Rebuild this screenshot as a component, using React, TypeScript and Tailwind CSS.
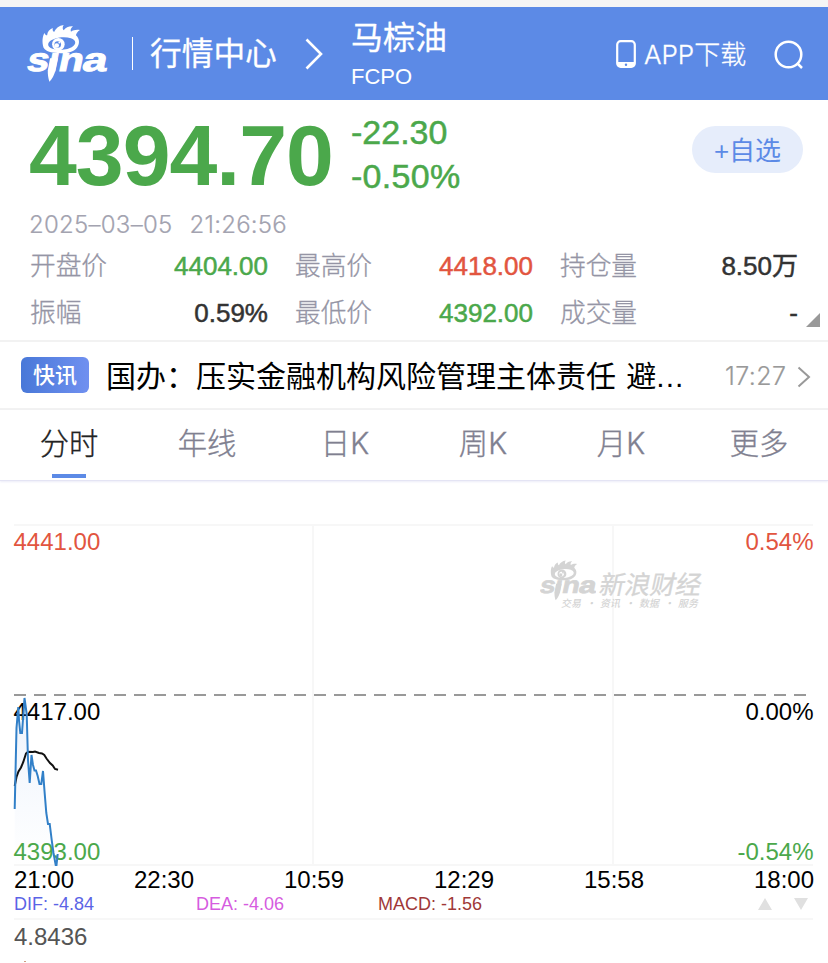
import { memo } from "react";
import clsx from "clsx";

interface Quote {
  label: string;
  value: string;
  tone: "up" | "down" | "flat";
}

const toneMap: Record<Quote["tone"], string> = {
  up: "text-[#e2553f]",
  down: "text-[#4ba84b]",
  flat: "text-[#333333]",
};

const quotes: Quote[] = [
  { label: "开盘价", value: "4404.00", tone: "down" },
  { label: "最高价", value: "4418.00", tone: "up" },
  { label: "持仓量", value: "8.50万", tone: "flat" },
  { label: "振幅", value: "0.59%", tone: "flat" },
  { label: "最低价", value: "4392.00", tone: "down" },
  { label: "成交量", value: "-", tone: "flat" },
];

const tabs = ["分时", "年线", "日K", "周K", "月K", "更多"];

// coordinates inside the chart svg (its top is the bottom of the tab bar)
const pricePoints: [number, number][] = [
  [14.7, 328], [15.3, 301], [16.5, 247], [18.3, 226], [19, 239], [20.3, 252], [22, 252],
  [24.5, 217], [26.7, 233], [28, 279], [29.7, 302], [31.5, 274], [33, 284], [34.5, 289.5],
  [36, 289.5], [37.7, 295], [39.5, 303], [41.3, 303], [43, 290], [44.5, 310], [46.3, 332],
  [48, 343], [49.7, 343], [51.7, 359], [53.5, 372], [55.7, 384], [56.5, 384], [57.7, 373],
];

const averagePoints: [number, number][] = [
  [14.7, 305], [16.5, 296], [18.5, 290.5], [21, 286.5], [23.3, 281], [26, 272.5], [28, 270.7],
  [33, 271], [35, 270.5], [39, 272], [42, 272.5], [44.3, 274], [46.5, 277.5], [50, 282],
  [52.7, 284.5], [55, 288], [58, 288.8],
];

const toPoints = (list: [number, number][]) => list.map((p) => p.join(",")).join(" ");

const SinaLogo = memo(function SinaLogo({ className, hole }: { className?: string; hole: string }) {
  return (
    <svg viewBox="0 0 240 172" className={className} fill="currentColor" overflow="visible">
      <path d="M49 68C44 50 46 34 52 24C54 29 56 31 60 31C61 20 67 13 77 9C76 15 77 19 81 21C86 10 96 2 110 0C106 7 106 12 110 16C116 8 126 3 138 4C131 10 130 15 132 20C139 15 149 13 159 15C151 20 148 26 147 31C158 41 159 56 151 67C142 80 122 86 101 85C77 85 56 81 49 68Z" />
      <ellipse cx="104" cy="56" rx="41" ry="19" transform="rotate(-5 104 56)" fill={hole} />
      <circle cx="94" cy="58" r="19" />
      <circle cx="92" cy="59" r="10" fill={hole} />
      <circle cx="89" cy="62" r="7" />
      <circle cx="97" cy="53" r="3" />
      <g
        transform="translate(0 139) skewX(-12)"
        fontSize="100"
        fontWeight="700"
        fontFamily="'Liberation Sans', sans-serif"
        stroke="currentColor"
        strokeWidth="3"
      >
        <text x="-5" textLength="66" lengthAdjust="spacingAndGlyphs">s</text>
        <text x="58" textLength="32" lengthAdjust="spacingAndGlyphs">ı</text>
        <text x="90" textLength="75" lengthAdjust="spacingAndGlyphs">n</text>
        <text x="162" textLength="74" lengthAdjust="spacingAndGlyphs">a</text>
      </g>
      <path d="M69 100L93 100L85 139C81 152 75 163 67 171C63 160 62 149 62 137Z" />
    </svg>
  );
});

const Header = memo(function Header() {
  return (
    <header className="flex h-[100px] items-center border-t-[7px] border-[#f5f5f5] bg-[#5c8ae6] pl-[27px] text-white">
      <SinaLogo className="-mt-px h-[57px] w-[80px]" hole="#5c8ae6" />
      <div className="ml-[25px] h-[33px] w-px bg-white" />
      <span className="mt-[2px] ml-[17px] w-[128px] text-[31.7px] leading-none [-webkit-text-stroke:0.3px]">行情中心</span>
      <svg viewBox="0 0 18 32" className="ml-[27px] h-8 w-[18px]" fill="none" stroke="currentColor" strokeWidth="2.6">
        <path d="M1.5 1.5L16 16L1.5 30.5" />
      </svg>
      <div className="ml-[28px] flex w-[265px] flex-col pt-[2px]">
        <span className="text-[32px] leading-[38px] [-webkit-text-stroke:0.3px]">马棕油</span>
        <span className="mt-[7px] text-[22px] leading-[26px]">FCPO</span>
      </div>
      <svg viewBox="0 0 20 28" className="h-7 w-5">
        <rect x="1.2" y="1.2" width="17.6" height="25.6" rx="3.5" fill="none" stroke="currentColor" strokeWidth="2.2" />
        <path d="M1 22H19V24Q19 27 16 27H4Q1 27 1 24Z" fill="currentColor" />
        <circle cx="10" cy="24.8" r="1.2" fill="#5c8ae6" />
      </svg>
      <span className="mt-[2px] ml-2 font-['Inter','Noto_Sans_CJK_SC',sans-serif] text-[26px] leading-none font-light [-webkit-text-stroke:0.3px]">
        APP下载
      </span>
      <svg viewBox="0 0 30 30" className="mt-[2px] ml-[28px] h-[30px] w-[30px]" fill="none" stroke="currentColor" strokeWidth="2.5">
        <circle cx="14.5" cy="14.5" r="12.8" />
        <path d="M23 23L28 28" />
      </svg>
    </header>
  );
});

const PricePanel = memo(function PricePanel() {
  return (
    <section className="relative h-[242px] border-b-2 border-[#f2f2f2] pl-[29px]">
      <div className="flex h-[106px] pt-[10px]">
        <span className="-mt-px w-[322px] text-[86px] leading-[92px] font-bold tracking-[-1px] text-[#4ba84b]">
          4394.70
        </span>
        <div className="w-[341px] text-[34px] leading-[44px] text-[#4ba84b] [-webkit-text-stroke:0.5px]">
          <div>-22.30</div>
          <div className="tracking-[0.3px]">-0.50%</div>
        </div>
        <button className="mt-4 h-[47px] w-[111px] rounded-full bg-[#e6edfb] pt-[3px] text-[26px] leading-[44px] text-[#5c8ae6]">
          +自选
        </button>
      </div>
      <div className="flex h-[37px] items-center gap-[17px] font-['Inter',sans-serif] text-[24px] font-light tracking-[0.25px] text-[#a3a3b0] [-webkit-text-stroke:0.2px]">
        <span>2025–03–05</span>
        <span>21:26:56</span>
      </div>
      <div className="grid w-[769px] grid-cols-3 gap-x-[27px] pl-px">
        {quotes.map((q) => (
          <div key={q.label} className="flex h-[47px] items-center justify-between text-[26px] leading-none">
            <span className="mt-px text-[25.7px] font-light text-[#9595a5] [-webkit-text-stroke:0.3px]">{q.label}</span>
            <span className={clsx("-mt-px [-webkit-text-stroke:0.5px]", toneMap[q.tone])}>{q.value}</span>
          </div>
        ))}
      </div>
      <svg viewBox="0 0 14 14" className="absolute top-[213px] left-[806px] h-[14px] w-[14px]">
        <path d="M14 0V14H0Z" fill="#999999" />
      </svg>
    </section>
  );
});

const NewsBar = memo(function NewsBar() {
  return (
    <section className="flex h-[68px] items-center border-b-2 border-[#f2f2f2] pl-[21px]">
      <span className="h-9 w-[68px] rounded-md bg-linear-to-r from-[#4878d8] to-[#7090f0] pt-px text-center text-[22px] leading-[35px] font-medium text-white">
        快讯
      </span>
      <span className="mt-[3px] ml-[17px] w-[619px] text-[30px] leading-none whitespace-nowrap text-black [word-spacing:2px]">
        国办：压实金融机构风险管理主体责任 避<span className="tracking-[1px]">...</span>
      </span>
      <span className="mt-[2px] font-['Inter',sans-serif] text-[25px] leading-none font-light tracking-[0.4px] text-[#999999] [-webkit-text-stroke:0.2px]">
        17:27
      </span>
      <svg viewBox="0 0 14 22" className="mt-[3px] ml-[11px] h-[22px] w-[14px]" fill="none" stroke="#999999" strokeWidth="2">
        <path d="M1.5 1.5L12 11L1.5 20.5" />
      </svg>
    </section>
  );
});

const TabBar = memo(function TabBar() {
  return (
    <nav className="grid h-[71px] grid-cols-6 border-b border-[#e4e4f4] shadow-[0_1px_2px_#ececf8]">
      {tabs.map((tab, i) => (
        <div
          key={tab}
          className={clsx(
            "flex flex-col items-center pt-[9px] text-[29.3px] leading-[50px]",
            "font-['Inter','Noto_Sans_CJK_SC',sans-serif] font-light [-webkit-text-stroke:0.35px]",
            i === 0 ? "text-[#222222]" : "text-[#808090]"
          )}
        >
          {tab}
          {i === 0 && <div className="mt-[5px] h-1 w-[34px] bg-[#5c8ae6]" />}
        </div>
      ))}
    </nav>
  );
});

const TimeChart = memo(function TimeChart() {
  return (
    <svg
      viewBox="0 0 828 385"
      className="block h-[385px] w-[828px]"
      fontFamily="'Liberation Sans', sans-serif"
      fontSize="24"
    >
      <defs>
        <linearGradient id="area" x1="0" y1="0" x2="0" y2="1">
          <stop offset="0" stopColor="#edf3fc" />
          <stop offset="1" stopColor="#ffffff" />
        </linearGradient>
      </defs>
      <g stroke="#f7f7f7" strokeWidth="2">
        <path d="M14 44H813M14 384H813M313 44V384M613 44V384" />
      </g>

      <g fill="#d4d4d4" color="#d4d4d4">
        <svg x="540" y="79" width="56" height="41">
          <SinaLogo hole="#ffffff" />
        </svg>
        <g transform="skewX(-12)" fontFamily="'Noto Sans CJK SC', sans-serif">
          <text x="622" y="113" fontSize="25.6" textLength="102" stroke="#d4d4d4" strokeWidth="0.3">新浪财经</text>
          <g fontSize="10" fontWeight="500">
            <text x="588" y="126.5">交易</text>
            <text x="613" y="126.5">·</text>
            <text x="627" y="126.5">资讯</text>
            <text x="652" y="126.5">·</text>
            <text x="666" y="126.5">数据</text>
            <text x="691" y="126.5">·</text>
            <text x="705" y="126.5">服务</text>
          </g>
        </g>
      </g>

      <polygon points={`14.7,383 ${toPoints(pricePoints)} 57.7,383`} fill="url(#area)" />
      <text x="13.5" y="69" fill="#e2553f">4441.00</text>
      <text x="813.5" y="69" fill="#e2553f" textAnchor="end">0.54%</text>
      <text x="13.5" y="239" fill="#000000">4417.00</text>
      <text x="813.5" y="239" fill="#000000" textAnchor="end">0.00%</text>
      <text x="13.5" y="379" fill="#4ba84b">4393.00</text>
      <text x="813.5" y="379" fill="#4ba84b" textAnchor="end">-0.54%</text>

      <path d="M14 214H813" stroke="#999999" strokeWidth="2" strokeDasharray="12 8" />
      <polyline points={toPoints(averagePoints)} fill="none" stroke="#111111" strokeWidth="2" />
      <polyline points={toPoints(pricePoints)} fill="none" stroke="#3280c8" strokeWidth="2" />
    </svg>
  );
});

const MacdPanel = memo(function MacdPanel() {
  return (
    <section className="pl-[14px]">
      <div className="flex h-[27px] items-center text-[24px] leading-none text-black">
        <span className="w-[120px]">21:00</span>
        <span className="w-[150px]">22:30</span>
        <span className="w-[150px]">10:59</span>
        <span className="w-[150px]">12:29</span>
        <span className="w-[170px]">15:58</span>
        <span>18:00</span>
      </div>
      <div className="flex h-[27px] w-[799px] items-center border-b-2 border-[#f7f7f7] pb-[3px] text-[18px] leading-none">
        <span className="w-[182px] text-[#5b64e6]">DIF: -4.84</span>
        <span className="w-[182px] text-[#d65ce0]">DEA: -4.06</span>
        <span className="text-[#a03838]">MACD: -1.56</span>
        <svg viewBox="0 0 50 12" className="mr-[5px] ml-auto h-3 w-[50px]" fill="#e0e0e0">
          <path d="M0 12L7 0L14 12ZM36 0H50L43 12Z" />
        </svg>
      </div>
      <div className="h-[34px] text-[24px] leading-[33px] text-[#555555]">4.8436</div>
      <div className="mt-[7px] ml-[10px] h-px w-[2px] bg-[#d09a80]" />
    </section>
  );
});

export default function App() {
  return (
    <div className="h-[963px] w-[828px] overflow-hidden bg-white font-['Liberation_Sans','Noto_Sans_CJK_SC',sans-serif]">
      <Header />
      <PricePanel />
      <NewsBar />
      <TabBar />
      <TimeChart />
      <MacdPanel />
    </div>
  );
}
